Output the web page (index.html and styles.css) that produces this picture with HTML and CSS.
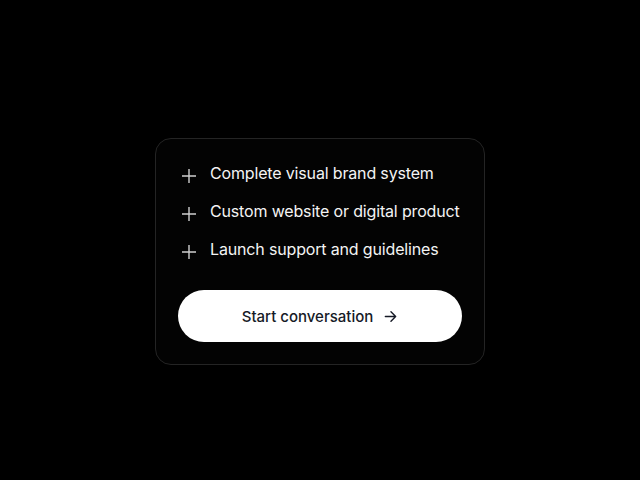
FILE: index.html
```html
<!DOCTYPE html>
<html lang="en">
<head>
<meta charset="utf-8">
<title>Card</title>
<link rel="stylesheet" href="styles.css">
</head>
<body>
<main class="page">
  <section class="card">
    <ul class="features">
      <li class="feature">
        <svg class="plus" viewBox="0 0 16 16" aria-hidden="true"><path d="M8 1v14M1 8h14"/></svg>
        <span>Complete visual brand system</span>
      </li>
      <li class="feature">
        <svg class="plus" viewBox="0 0 16 16" aria-hidden="true"><path d="M8 1v14M1 8h14"/></svg>
        <span>Custom website or digital product</span>
      </li>
      <li class="feature">
        <svg class="plus" viewBox="0 0 16 16" aria-hidden="true"><path d="M8 1v14M1 8h14"/></svg>
        <span>Launch support and guidelines</span>
      </li>
    </ul>
    <button class="cta" type="button">
      <span>Start conversation</span>
      <svg class="arrow" viewBox="0 0 16 16" aria-hidden="true"><path d="M2.5 8h11M8.5 3l5 5-5 5"/></svg>
    </button>
  </section>
</main>
</body>
</html>
```

FILE: styles.css
```css
* { box-sizing: border-box; }
html, body { margin: 0; height: 100%; background: #000; }
body { font-family: Inter, "Noto Sans", sans-serif; }
.page {
  height: 480px;
  padding-top: 23px;
  display: flex;
  align-items: center;
  justify-content: center;
}
.card {
  width: 330px;
  background: #030303;
  border: 1px solid #242424;
  border-radius: 16px;
  padding: 22px;
  display: flex;
  flex-direction: column;
}
.features {
  list-style: none;
  margin: 0;
  padding: 0 0 0 3px;
  display: flex;
  flex-direction: column;
  gap: 14px;
}
.feature {
  display: flex;
  align-items: flex-start;
  gap: 13px;
  color: #f4f4f4;
  font-size: 16px;
  line-height: 24px;
  font-weight: 400;
  letter-spacing: -0.16px;
  white-space: nowrap;
}
.plus {
  width: 16px;
  height: 16px;
  margin-top: 7px;
  flex: none;
  fill: none;
  stroke: #cfcfcf;
  stroke-width: 1.4;
}
.cta {
  margin-top: 29px;
  height: 52px;
  border: none;
  border-radius: 26px;
  background: #fff;
  color: #161a26;
  font-family: inherit;
  font-size: 15px;
  font-weight: 500;
  display: flex;
  align-items: center;
  justify-content: center;
  gap: 10px;
  padding: 0;
}
.arrow {
  width: 15px;
  height: 15px;
  fill: none;
  stroke: #161a26;
  stroke-width: 1.5;
  stroke-linecap: round;
  stroke-linejoin: round;
}
```
